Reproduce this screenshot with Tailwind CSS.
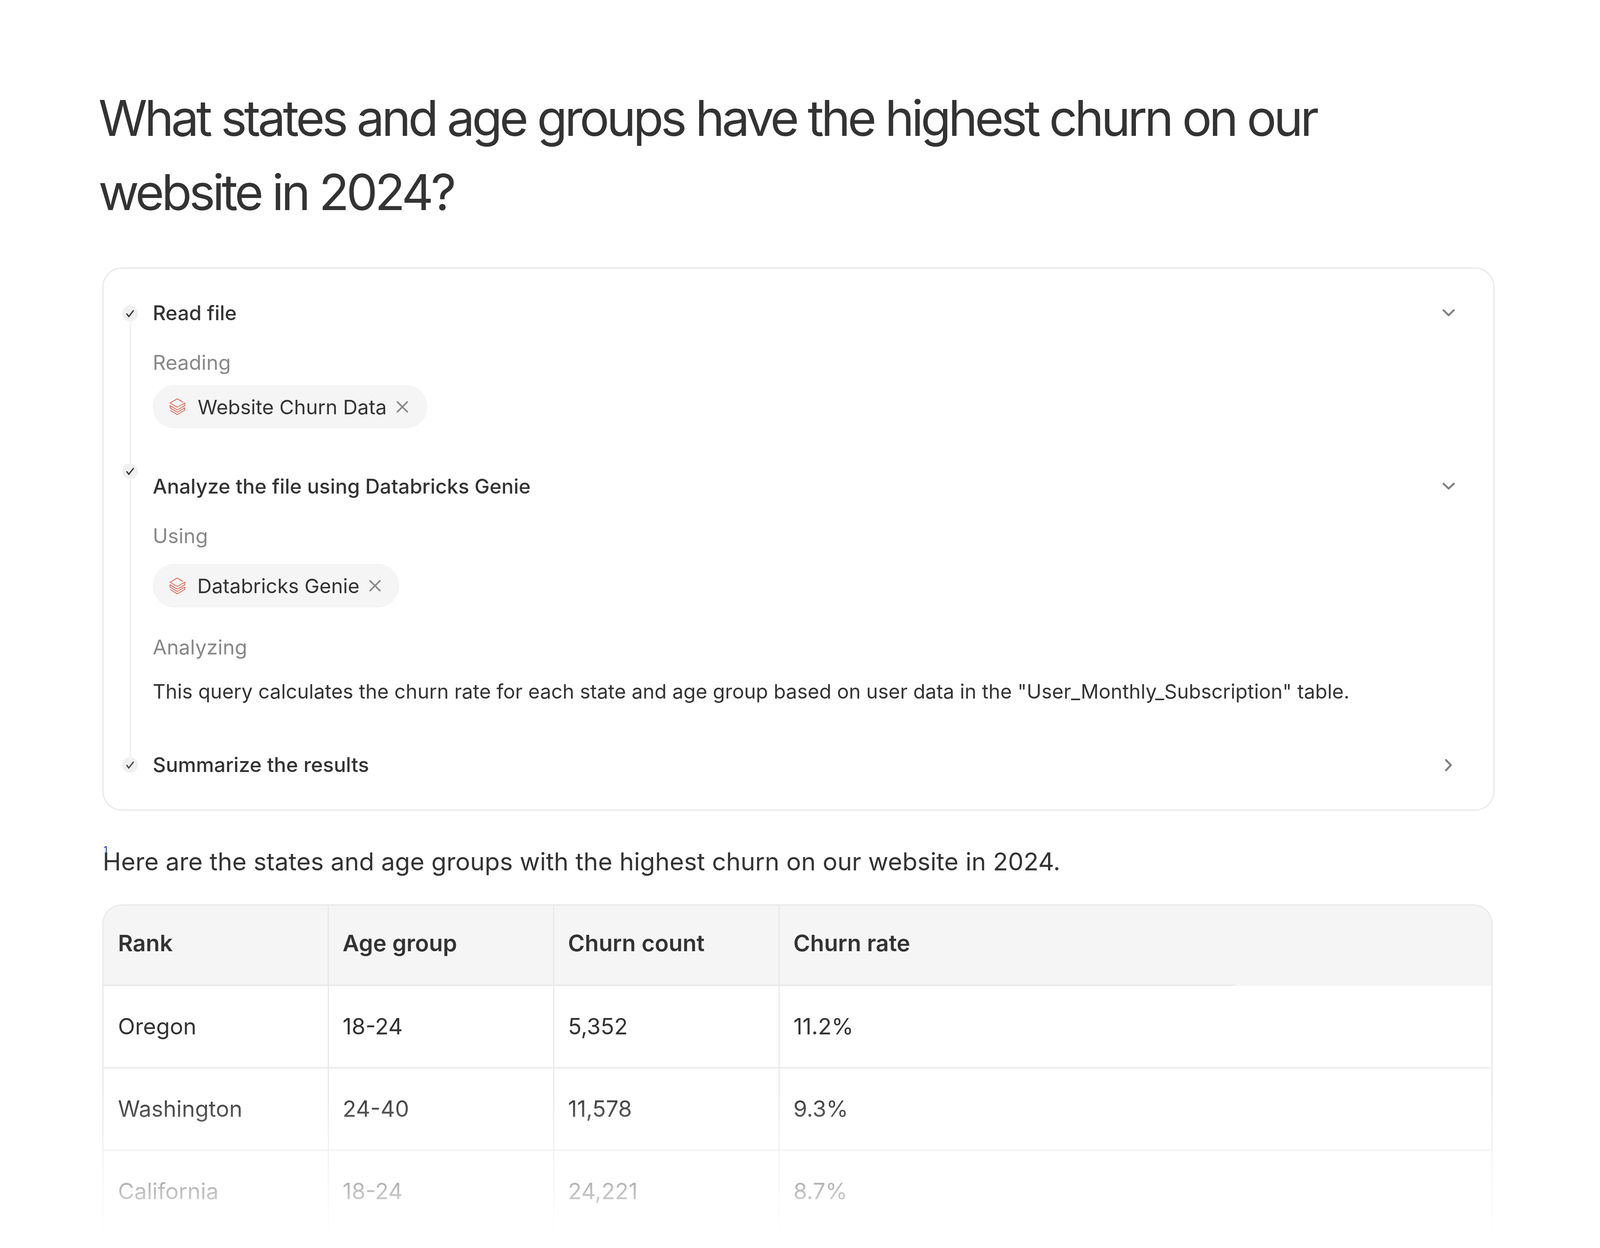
<!DOCTYPE html>
<html lang="en">
<head>
<meta charset="utf-8">
<title>Churn answer</title>
<script src="https://cdn.jsdelivr.net/npm/@tailwindcss/browser@4"></script>
</head>
<body class="bg-white">
<main class="h-[3196px] w-full overflow-hidden pt-[207px] pl-[262px] font-['Inter',sans-serif] text-[#333]">
  <div class="w-[3564px]">
    <h1 class="-ml-[10px] w-[3300px] text-[127px] leading-[190px] font-normal tracking-[-7.13px]">What states and age groups have the highest churn on our website in 2024?</h1>

    <section class="mt-[98px] flex flex-col rounded-[50px] border-[3px] border-[#e8e8e8] pt-[73px] pr-[99px] pb-[74px] pl-[48px]">
      <!-- Step 1 -->
      <div class="flex h-[422px] gap-[38px]">
        <div class="flex w-[40px] flex-col items-center pt-[22px]">
          <span class="flex size-[40px] shrink-0 items-center justify-center rounded-full bg-[#f0f0f0]">
            <svg class="size-[40px]" viewBox="0 0 48 48" fill="none" stroke="#333" stroke-width="4"><path d="M13 24l7 9 15-19"/></svg>
          </span>
          <span class="w-[3px] flex-1 bg-[#eeeeee]"></span>
        </div>
        <div class="flex-1">
          <div class="flex h-[80px] items-center justify-between">
            <span class="text-[51.7px] leading-[80px] font-medium">Read file</span>
            <svg class="h-[18px] w-[31px]" viewBox="0 0 37 21" fill="none" stroke="#808080" stroke-width="6" stroke-linecap="round" stroke-linejoin="round"><path d="M3 3l15.5 15L34 3"/></svg>
          </div>
          <p class="mt-[48px] text-[52px] leading-[80px] text-[#888]">Reading</p>
          <div class="mt-[17px] flex h-[111px] w-[703px] items-center rounded-full bg-[#f5f5f5] pl-[43px]">
            <svg class="h-[43px] w-[40px] shrink-0" viewBox="-3 -3 151 159" fill="none" stroke="#ea3f29" stroke-width="6"><path d="M127 33L71 0 2 41l69 40 74-40v25l-74 42-69-42v22l69 42 74-42v23l-74 42-69-42"/></svg>
            <span class="ml-[32px] text-[51.3px] leading-[80px]">Website Churn Data</span>
            <svg class="ml-[24px] size-[32px] shrink-0" viewBox="0 0 38 38" fill="none" stroke="#888" stroke-width="5" stroke-linecap="round"><path d="M4 4l30 30M34 4L4 34"/></svg>
          </div>
        </div>
      </div>
      <!-- Step 2 -->
      <div class="flex h-[736px] gap-[38px]">
        <div class="flex w-[40px] flex-col items-center">
          <span class="h-[4px] w-[3px] bg-[#eeeeee]"></span>
          <span class="flex size-[40px] shrink-0 items-center justify-center rounded-full bg-[#f0f0f0]">
            <svg class="size-[40px]" viewBox="0 0 48 48" fill="none" stroke="#333" stroke-width="4"><path d="M13 24l7 9 15-19"/></svg>
          </span>
          <span class="w-[3px] flex-1 bg-[#eeeeee]"></span>
        </div>
        <div class="flex-1 pt-[22px]">
          <div class="flex h-[80px] items-center justify-between">
            <span class="text-[51.7px] leading-[80px] font-medium">Analyze the file using Databricks Genie</span>
            <svg class="h-[18px] w-[31px]" viewBox="0 0 37 21" fill="none" stroke="#808080" stroke-width="6" stroke-linecap="round" stroke-linejoin="round"><path d="M3 3l15.5 15L34 3"/></svg>
          </div>
          <p class="mt-[48px] text-[52px] leading-[80px] text-[#888]">Using</p>
          <div class="mt-[31px] flex h-[112px] w-[631px] items-center rounded-full bg-[#f5f5f5] pl-[43px]">
            <svg class="h-[43px] w-[40px] shrink-0" viewBox="-3 -3 151 159" fill="none" stroke="#ea3f29" stroke-width="6"><path d="M127 33L71 0 2 41l69 40 74-40v25l-74 42-69-42v22l69 42 74-42v23l-74 42-69-42"/></svg>
            <span class="ml-[31px] text-[51.3px] leading-[80px]">Databricks Genie</span>
            <svg class="ml-[24px] size-[32px] shrink-0" viewBox="0 0 38 38" fill="none" stroke="#888" stroke-width="5" stroke-linecap="round"><path d="M4 4l30 30M34 4L4 34"/></svg>
          </div>
          <p class="mt-[62px] text-[52px] leading-[80px] text-[#888]">Analyzing</p>
          <p class="mt-[33px] text-[50.9px] leading-[80px]">This query calculates the churn rate for each state and age group based on user data in the "User_Monthly_Subscription" table.</p>
        </div>
      </div>
      <!-- Step 3 -->
      <div class="flex gap-[38px]">
        <div class="flex w-[40px] flex-col items-center">
          <span class="h-[20px] w-[3px] bg-[#eeeeee]"></span>
          <span class="flex size-[40px] shrink-0 items-center justify-center rounded-full bg-[#f0f0f0]">
            <svg class="size-[40px]" viewBox="0 0 48 48" fill="none" stroke="#444" stroke-width="4"><path d="M13 24l7 9 15-19"/></svg>
          </span>
        </div>
        <div class="flex h-[80px] flex-1 items-center justify-between">
          <span class="text-[51.9px] leading-[80px] font-medium">Summarize the results</span>
          <svg class="mr-[7px] h-[31px] w-[18px]" viewBox="0 0 21 37" fill="none" stroke="#808080" stroke-width="6" stroke-linecap="round" stroke-linejoin="round"><path d="M3 3l15 15.5L3 34"/></svg>
        </div>
      </div>
    </section>

    <div class="relative mt-[80px] text-[63.1px] leading-[100px]">
      <sup class="absolute top-[6px] left-[3px] text-[25px] leading-[30px] text-[#2b2bdb]">1</sup>
      <p class="pl-[1px]">Here are the states and age groups with the highest churn on our website in 2024.</p>
    </div>

    <div class="relative mt-[60px] h-[854px] w-[3559px] overflow-hidden">
      <div class="h-[900px] overflow-hidden rounded-t-[50px] border-x-[3px] border-t-[3px] border-[#e8e8e8] text-[57.2px]">
        <div class="flex h-[206px] bg-[#f5f5f5] text-[58.3px] font-semibold">
          <div class="flex w-[577px] items-center border-r-[3px] border-b-[4px] border-[#e8e8e8] pb-[8px] pl-[37px]">Rank</div>
          <div class="flex w-[577px] items-center border-r-[3px] border-b-[4px] border-[#e8e8e8] pb-[8px] pl-[35px]">Age group</div>
          <div class="flex w-[577px] items-center border-r-[3px] border-b-[4px] border-[#e8e8e8] pb-[8px] pl-[35px]">Churn count</div>
          <div class="flex w-[1167px] items-center border-b-[4px] border-[#e8e8e8] pb-[8px] pl-[35px]">Churn rate</div>
          <div class="flex-1"></div>
        </div>
        <div class="mr-[3px] flex h-[211px] border-b-[3px] border-[#e8e8e8]">
          <div class="flex w-[577px] items-center border-r-[3px] border-[#e8e8e8] pl-[37px]">Oregon</div>
          <div class="flex w-[577px] items-center border-r-[3px] border-[#e8e8e8] pl-[35px]">18-24</div>
          <div class="flex w-[577px] items-center border-r-[3px] border-[#e8e8e8] pl-[35px]">5,352</div>
          <div class="flex flex-1 items-center pl-[35px]">11.2%</div>
        </div>
        <div class="mr-[3px] flex h-[211px] border-b-[3px] border-[#e8e8e8]">
          <div class="flex w-[577px] items-center border-r-[3px] border-[#e8e8e8] pl-[37px]">Washington</div>
          <div class="flex w-[577px] items-center border-r-[3px] border-[#e8e8e8] pl-[35px]">24-40</div>
          <div class="flex w-[577px] items-center border-r-[3px] border-[#e8e8e8] pl-[35px]">11,578</div>
          <div class="flex flex-1 items-center pl-[35px]">9.3%</div>
        </div>
        <div class="mr-[3px] flex h-[211px] border-b-[3px] border-[#e8e8e8]">
          <div class="flex w-[577px] items-center border-r-[3px] border-[#e8e8e8] pl-[37px]">California</div>
          <div class="flex w-[577px] items-center border-r-[3px] border-[#e8e8e8] pl-[35px]">18-24</div>
          <div class="flex w-[577px] items-center border-r-[3px] border-[#e8e8e8] pl-[35px]">24,221</div>
          <div class="flex flex-1 items-center pl-[35px]">8.7%</div>
        </div>
      </div>
      <div class="absolute top-[474px] left-0 h-[380px] w-full bg-linear-to-b from-white/0 to-white"></div>
    </div>
  </div>
</main>
</body>
</html>
